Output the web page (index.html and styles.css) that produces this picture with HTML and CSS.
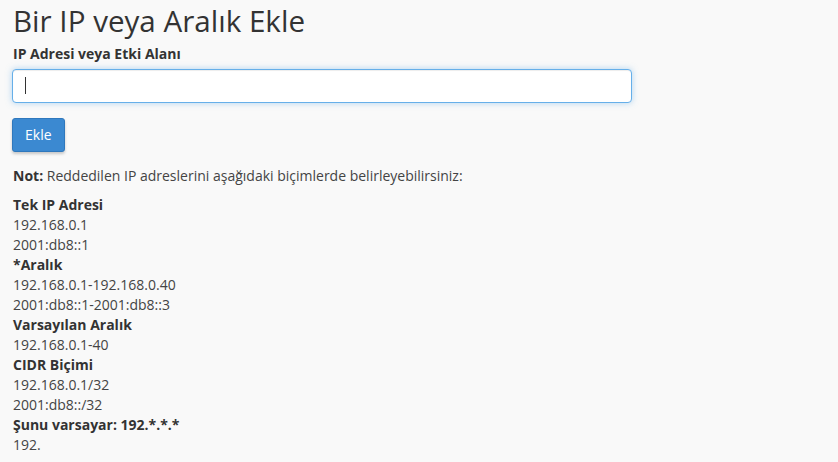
FILE: index.html
```html
<!DOCTYPE html>
<html lang="tr">
<head>
<meta charset="utf-8">
<title>Bir IP veya Aralık Ekle</title>
<link rel="stylesheet" href="styles.css">
</head>
<body>
<h1 class="page-title">Bir IP veya Aralık Ekle</h1>
<form class="add-form">
  <label class="field-label" for="ip">IP Adresi veya Etki Alanı</label>
  <div class="input-wrap">
    <input class="text-input" id="ip" type="text">
    <span class="caret"></span>
  </div>
  <button class="btn-primary" type="button">Ekle</button>
</form>
<p class="note"><strong>Not:</strong> Reddedilen IP adreslerini aşağıdaki biçimlerde belirleyebilirsiniz:</p>
<dl class="formats">
  <dt>Tek IP Adresi</dt>
  <dd>192.168.0.1</dd>
  <dd>2001:db8::1</dd>
  <dt>*Aralık</dt>
  <dd>192.168.0.1-192.168.0.40</dd>
  <dd>2001:db8::1-2001:db8::3</dd>
  <dt>Varsayılan Aralık</dt>
  <dd>192.168.0.1-40</dd>
  <dt>CIDR Biçimi</dt>
  <dd>192.168.0.1/32</dd>
  <dd>2001:db8::/32</dd>
  <dt>Şunu varsayar: 192.*.*.*</dt>
  <dd>192.</dd>
</dl>
</body>
</html>
```
FILE: styles.css
```css
html, body {
  margin: 0;
  padding: 0;
  background: #f9f9f9;
}
body {
  padding: 0 12px;
  font-family: "Open Sans", "DejaVu Sans", sans-serif;
  font-size: 14px;
  line-height: 20px;
  color: #333;
}
.page-title {
  margin: 0 0 0 1px;
  font-size: 29.6px;
  line-height: 41px;
  font-weight: 400;
  color: #333;
}
.add-form {
  display: flex;
  flex-direction: column;
  align-items: flex-start;
  margin-top: 3px;
}
.field-label {
  display: block;
  font-weight: 700;
  margin-left: 1px;
  color: #333;
}
.input-wrap {
  position: relative;
  margin-top: 5px;
}
.text-input {
  display: block;
  box-sizing: border-box;
  width: 620px;
  height: 34px;
  margin: 0;
  padding: 6px 12px;
  border: 1px solid #66afe9;
  border-radius: 4px;
  background: #fff;
  outline: none;
  box-shadow: inset 0 1px 1px rgba(0,0,0,.075), 0 0 6px rgba(102,175,233,.5);
  font: inherit;
}
.caret {
  position: absolute;
  left: 13px;
  top: 8px;
  width: 1px;
  height: 17px;
  background: #333;
}
.btn-primary {
  margin-top: 15px;
  box-sizing: border-box;
  height: 34px;
  padding: 6px 12px;
  border: 1px solid #2f78bd;
  border-radius: 3px;
  background: #3b89d1;
  color: #fff;
  font: inherit;
  box-shadow: 0 2px 3px rgba(0,0,0,.2);
  cursor: pointer;
}
.note {
  margin: 14px 0 9px 1px;
  color: #444;
}
.note strong {
  color: #333;
}
.formats {
  margin: 0 0 0 1px;
}
.formats dt {
  font-weight: 700;
  color: #333;
}
.formats dd {
  margin: 0;
  color: #444;
}
```
